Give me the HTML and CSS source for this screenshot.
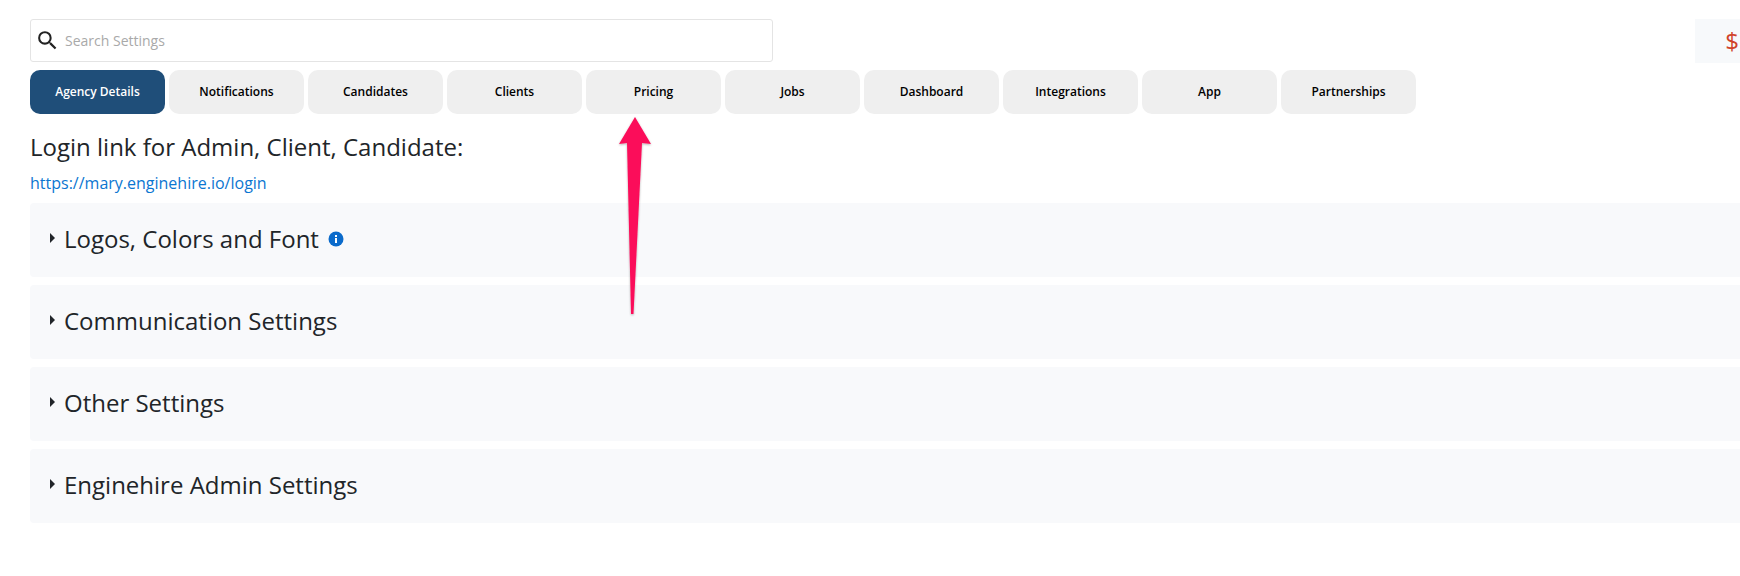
FILE: index.html
```html
<!DOCTYPE html>
<html lang="en">

<head>
    <meta charset="UTF-8" />
    <meta name="viewport" content="width=device-width, initial-scale=1.0" />
    <title>Settings</title>
    <link rel="stylesheet" href="styles.css">
</head>

<body>
    <div class="container">
        <!-- Search + billing -->
        <div class="top-row">
            <div class="search-box">
                <svg class="search-icon" width="25" height="25" viewBox="0 0 24 24">
                    <path d="M15.5 14h-.79l-.28-.27A6.47 6.47 0 0 0 16 9.5 6.5 6.5 0 1 0 9.5 16c1.61 0 3.09-.59 4.23-1.57l.27.28v.79l5 4.99L20.49 19l-4.99-5zm-6 0C7.01 14 5 11.99 5 9.5S7.01 5 9.5 5 14 7.01 14 9.5 11.99 14 9.5 14z" />
                </svg>
                <span class="search-placeholder">Search Settings</span>
            </div>
            <div class="billing"><span class="dollar">$</span></div>
        </div>

        <!-- Tabs -->
        <div class="tabs">
            <button class="tab active">Agency Details</button>
            <button class="tab">Notifications</button>
            <button class="tab">Candidates</button>
            <button class="tab">Clients</button>
            <button class="tab">Pricing</button>
            <button class="tab">Jobs</button>
            <button class="tab">Dashboard</button>
            <button class="tab">Integrations</button>
            <button class="tab">App</button>
            <button class="tab">Partnerships</button>
        </div>

        <h2 class="login-title">Login link for Admin, Client, Candidate:</h2>
        <a class="login-link" href="#">https://mary.enginehire.io/login</a>

        <!-- Sections -->
        <div class="sections">
            <div class="section">
                <span class="caret"></span>
                <span class="section-title">Logos, Colors and Font</span>
                <svg class="info-icon" width="16" height="16" viewBox="0 0 16 16">
                    <circle cx="8" cy="8" r="7.5" fill="#0b6bcb" />
                    <rect x="7" y="7" width="2" height="5" fill="#fff" />
                    <rect x="7" y="4" width="2" height="2" fill="#fff" />
                </svg>
            </div>
            <div class="section">
                <span class="caret"></span>
                <span class="section-title">Communication Settings</span>
            </div>
            <div class="section">
                <span class="caret"></span>
                <span class="section-title">Other Settings</span>
            </div>
            <div class="section">
                <span class="caret"></span>
                <span class="section-title">Enginehire Admin Settings</span>
            </div>
        </div>
    </div>

    <!-- Annotation arrow -->
    <svg class="arrow" width="50" height="210" viewBox="0 0 50 210">
        <defs>
            <filter id="arrowShadow" x="-30%" y="-10%" width="160%" height="120%">
                <feDropShadow dx="0" dy="1" stdDeviation="1" flood-color="#000" flood-opacity="0.3" />
            </filter>
        </defs>
        <polygon points="25,7 41,34 32,33 23.5,204 21,204 17,33 9,34" fill="#fb0f5a" filter="url(#arrowShadow)" />
    </svg>
</body>

</html>
```

FILE: styles.css
```css
body {
    font-family: "Open Sans", sans-serif;
    background-color: #fff;
    color: #212529;
    margin: 0;
    overflow: hidden;
}

.container {
    padding: 19px 0 0 30px;
}

.top-row {
    display: flex;
    justify-content: space-between;
    align-items: flex-start;
}

.search-box {
    display: flex;
    align-items: center;
    width: 743px;
    height: 43px;
    box-sizing: border-box;
    border: 1px solid #e4e4e4;
    border-radius: 3px;
    padding-left: 4px;
}

.search-icon {
    fill: #222;
}

.search-placeholder {
    margin-left: 5px;
    font-size: 14px;
    color: #a9a9a9;
}

.billing {
    width: 45px;
    height: 44px;
    background-color: #f7f9fb;
    text-align: right;
}

.dollar {
    font-size: 24px;
    font-weight: 500;
    line-height: 44px;
    color: #d0432a;
    margin-right: 1px;
}

.tabs {
    display: flex;
    gap: 4px;
    margin-top: 7px;
}

.tab {
    width: 135px;
    height: 44px;
    border: none;
    border-radius: 10px;
    padding: 0 0 2px;
    background-color: #efefef;
    color: #000;
    font-family: "Open Sans", sans-serif;
    font-size: 12px;
    font-weight: 600;
}

.tab.active {
    background-color: #1f4e79;
    color: #fff;
}

.login-title {
    margin: 17px 0 0;
    font-size: 24px;
    font-weight: 400;
    line-height: 32px;
}

.login-link {
    display: block;
    margin-top: 8px;
    font-size: 16px;
    line-height: 24px;
    color: #0b76d1;
    text-decoration: none;
}

.sections {
    display: flex;
    flex-direction: column;
    gap: 8px;
    margin-top: 8px;
}

.section {
    display: flex;
    align-items: center;
    box-sizing: border-box;
    height: 74px;
    padding: 0 0 4px 20px;
    border-radius: 4px 0 0 4px;
    background-color: #f8f9fb;
}

.caret {
    width: 0;
    height: 0;
    border-top: 5px solid transparent;
    border-bottom: 5px solid transparent;
    border-left: 5px solid #212529;
    margin-right: 9px;
}

.section-title {
    font-size: 24px;
}

.info-icon {
    margin: 2px 0 0 9px;
}

.arrow {
    position: absolute;
    left: 610px;
    top: 110px;
}
```
